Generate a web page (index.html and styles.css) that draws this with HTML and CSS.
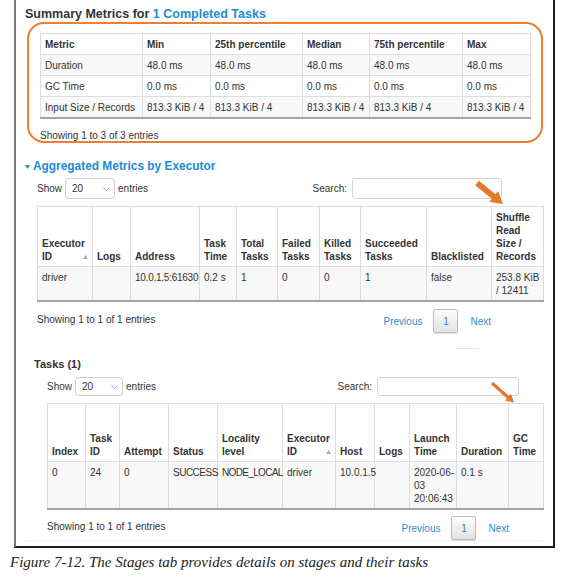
FILE: index.html
```html
<!DOCTYPE html>
<html>
<head>
<meta charset="utf-8">
<link rel="stylesheet" href="styles.css">
</head>
<body>
<div class="frame">
  <h4 class="title">Summary Metrics for <span class="link">1 Completed Tasks</span></h4>
  <div class="highlight">
    <table class="grid summary">
      <colgroup><col style="width:102px"><col style="width:68px"><col style="width:92px"><col style="width:67px"><col style="width:93px"><col style="width:68px"></colgroup>
      <thead><tr><th>Metric</th><th>Min</th><th>25th percentile</th><th>Median</th><th>75th percentile</th><th>Max</th></tr></thead>
      <tbody>
        <tr><td>Duration</td><td>48.0 ms</td><td>48.0 ms</td><td>48.0 ms</td><td>48.0 ms</td><td>48.0 ms</td></tr>
        <tr><td>GC Time</td><td>0.0 ms</td><td>0.0 ms</td><td>0.0 ms</td><td>0.0 ms</td><td>0.0 ms</td></tr>
        <tr><td>Input Size / Records</td><td>813.3 KiB / 4</td><td>813.3 KiB / 4</td><td>813.3 KiB / 4</td><td>813.3 KiB / 4</td><td>813.3 KiB / 4</td></tr>
      </tbody>
    </table>
    <div class="info sum-info">Showing 1 to 3 of 3 entries</div>
  </div>

  <h4 class="section-title"><svg class="caret" width="5" height="4" viewBox="0 0 5 4"><path d="M0 0H5L2.5 4Z" fill="#1d8bd1"/></svg>Aggregated Metrics by Executor</h4>
  <div class="block exec-block">
    <div class="controls">
      <div class="length">Show <span class="select sel-exec">20<svg class="chev" width="7" height="4" viewBox="0 0 7 4"><path d="M0.5 0.5L3.5 3.5L6.5 0.5" fill="none" stroke="#9a9a9a" stroke-width="0.9"/></svg></span> entries</div>
      <div class="search search-exec">Search: <span class="input inp-exec"></span></div>
    </div>
    <table class="grid exec">
      <colgroup><col style="width:55px"><col style="width:38px"><col style="width:69px"><col style="width:37px"><col style="width:41px"><col style="width:42px"><col style="width:41px"><col style="width:66px"><col style="width:65px"><col style="width:52px"></colgroup>
      <thead><tr><th class="sorted">Executor ID<svg class="sort" width="5" height="4" viewBox="0 0 5 4"><path d="M0 4H5L2.5 0Z" fill="#a2a2e2"/></svg></th><th>Logs</th><th>Address</th><th>Task Time</th><th>Total Tasks</th><th>Failed Tasks</th><th>Killed Tasks</th><th>Succeeded Tasks</th><th>Blacklisted</th><th>Shuffle Read Size / Records</th></tr></thead>
      <tbody>
        <tr><td>driver</td><td></td><td class="tight-s">10.0.1.5:61630</td><td>0.2 s</td><td>1</td><td>0</td><td>0</td><td>1</td><td>false</td><td>253.8 KiB / 12411</td></tr>
      </tbody>
    </table>
    <div class="footer footer-exec">
      <div class="info">Showing 1 to 1 of 1 entries</div>
      <div class="pager pager-exec"><span class="plink">Previous</span><span class="page">1</span><span class="plink">Next</span></div>
    </div>
  </div>
  <div class="rule-short"></div>

  <h4 class="tasks-title">Tasks (1)</h4>
  <div class="block task-block">
    <div class="controls">
      <div class="length">Show <span class="select sel-task">20<svg class="chev" width="7" height="4" viewBox="0 0 7 4"><path d="M0.5 0.5L3.5 3.5L6.5 0.5" fill="none" stroke="#9a9a9a" stroke-width="0.9"/></svg></span> entries</div>
      <div class="search search-task">Search: <span class="input inp-task"></span></div>
    </div>
    <table class="grid tasks">
      <colgroup><col style="width:38px"><col style="width:34px"><col style="width:49px"><col style="width:49px"><col style="width:65px"><col style="width:53px"><col style="width:39px"><col style="width:35px"><col style="width:47px"><col style="width:52px"><col style="width:35px"></colgroup>
      <thead><tr><th>Index</th><th>Task ID</th><th>Attempt</th><th>Status</th><th>Locality level</th><th class="sorted">Executor ID<svg class="sort" width="5" height="4" viewBox="0 0 5 4"><path d="M0 4H5L2.5 0Z" fill="#a2a2e2"/></svg></th><th>Host</th><th>Logs</th><th>Launch Time</th><th>Duration</th><th>GC Time</th></tr></thead>
      <tbody>
        <tr><td>0</td><td>24</td><td>0</td><td class="tight-m">SUCCESS</td><td class="tight-l">NODE_LOCAL</td><td>driver</td><td>10.0.1.5</td><td></td><td class="launch">2020-06-<br>03<br>20:06:43</td><td>0.1 s</td><td></td></tr>
      </tbody>
    </table>
    <div class="footer footer-task">
      <div class="info">Showing 1 to 1 of 1 entries</div>
      <div class="pager pager-task"><span class="plink">Previous</span><span class="page">1</span><span class="plink">Next</span></div>
    </div>
  </div>
  <div class="rule"></div>

  <svg class="arrow arrow-exec" width="34" height="30" viewBox="472 178 34 30"><polygon points="478.9,180.7 495.6,194.2 498.1,191.1 503,204 489.3,201.9 491.8,198.8 475.1,185.3" fill="#e8782c"/></svg>
  <svg class="arrow arrow-task" width="30" height="26" viewBox="488 379 30 26"><polygon points="493.1,381.8 509.1,396.0 511.0,393.8 514,402.5 505.0,400.6 506.9,398.4 490.9,384.2" fill="#e8782c"/></svg>
</div>
<p class="caption">Figure 7-12. The Stages tab provides details on stages and their tasks</p>
</body>
</html>
```

FILE: styles.css
```css
body {
  margin: 0;
  font-family: "Liberation Sans", Arial, sans-serif;
  font-size: 10px;
  color: #333;
  background: #fff;
}

.frame {
  position: relative;
  margin-left: 14px;
  width: 541px;
  height: 548px;
  box-sizing: border-box;
  border-left: 2px solid #7a7a7a;
  border-right: 2px solid #1e1e1e;
  border-bottom: 2px solid #1e1e1e;
  padding-top: 6px;
}

.title {
  margin: 0 0 0 9px;
  font-size: 12.5px;
  line-height: 16px;
  font-weight: bold;
  color: #333;
}

.link {
  color: #1d8bd1;
}

.highlight {
  margin-left: 11px;
  width: 516px;
  height: 121px;
  box-sizing: border-box;
  border: 2px solid #ee7f30;
  border-radius: 17px;
  padding: 9px 0 0 11px;
}

table.grid {
  border-collapse: collapse;
  table-layout: fixed;
  border: 1px solid #ddd;
  border-bottom: 2px solid #a5a5a5;
}

.grid th,
.grid td {
  border: 1px solid #ddd;
  padding: 3.5px 2px 3.5px 4px;
  line-height: 13px;
  text-align: left;
  white-space: normal;
}

.grid th {
  font-weight: bold;
  vertical-align: bottom;
  background: #fff;
}

.grid td {
  vertical-align: top;
}

.grid tbody tr:nth-child(odd) td {
  background: #f8f8f8;
}

.tight-s { letter-spacing: -0.25px; }
.tight-m { letter-spacing: -0.5px; }
.tight-l { letter-spacing: -0.65px; }
.grid td.launch { white-space: nowrap; padding-right: 0; }

.summary { width: 490px; }
.exec { width: 506px; }
.tasks { width: 496px; }

.tasks thead tr { height: 58px; }

.sorted { position: relative; }
.sort {
  position: absolute;
  right: 4px;
  bottom: 7px;
  display: block;
}

.info {
  line-height: 13px;
}

.sum-info {
  margin-top: 10px;
}

.section-title {
  margin: 15px 0 0 9px;
  font-size: 11.9px;
  line-height: 16px;
  font-weight: bold;
  color: #1d8bd1;
  display: flex;
  align-items: center;
}

.caret {
  display: block;
  margin-right: 3px;
  margin-top: 1px;
}

.block { display: flex; flex-direction: column; }
.exec-block { margin: 4px 0 0 21px; width: 506px; }
.task-block { margin: 5px 0 0 31px; width: 496px; }

.controls {
  display: flex;
  justify-content: space-between;
  align-items: center;
}

.length, .search {
  display: flex;
  align-items: center;
}

.select {
  display: flex;
  align-items: center;
  justify-content: space-between;
  box-sizing: border-box;
  border: 1px solid #cfcfcf;
  border-radius: 4px;
  background: #fff;
  margin: 0 3px;
  padding: 0 4px 0 6px;
}

.sel-exec { width: 50px; height: 21px; }
.sel-task { width: 48px; height: 19px; }

.chev { display: block; }

.input {
  display: block;
  box-sizing: border-box;
  border: 1px solid #d4d4d4;
  border-radius: 3px;
  margin-left: 5px;
  background: #fff;
}

.inp-exec { width: 150px; height: 21px; }
.inp-task { width: 142px; height: 19px; }
.search-exec { margin-right: 41px; }
.search-task { margin-right: 24px; }

.exec { margin-top: 7px; }
.tasks { margin-top: 7px; }

.footer {
  display: flex;
  justify-content: space-between;
  align-items: flex-start;
}

.footer .info { padding-top: 3.5px; }
.footer-exec { margin-top: 7px; }
.footer-task { margin-top: 6px; }

.pager {
  display: flex;
  align-items: center;
}

.pager-exec { margin-right: 52px; }
.pager-task { margin-right: 34px; }

.plink {
  color: #2a8ed6;
}

.page {
  display: flex;
  align-items: center;
  justify-content: center;
  box-sizing: border-box;
  width: 25px;
  height: 24px;
  margin: 0 12px 0 11px;
  border: 1px solid #bdbdbd;
  border-radius: 2px;
  background: linear-gradient(#fdfdfd, #e2e2e2);
  box-shadow: 0 1px 1px rgba(0,0,0,0.12);
  color: #3a7ec0;
}

.rule-short {
  margin: 15px 0 0 440px;
  width: 23px;
  height: 1px;
  background: #e6e6e6;
}

.tasks-title {
  margin: 7px 0 0 18px;
  font-size: 11px;
  line-height: 16px;
  font-weight: bold;
  color: #333;
}

.rule {
  margin-left: 9px;
  width: 518px;
  height: 1px;
  background: #efefef;
}

.arrow {
  position: absolute;
  display: block;
}

.arrow-exec { left: 456px; top: 178px; }
.arrow-task { left: 472px; top: 379px; }

.caption {
  margin: 5px 0 0 10px;
  font-family: "Liberation Serif", "Times New Roman", serif;
  font-style: italic;
  font-size: 15px;
  line-height: 18px;
  color: #222;
}
```
